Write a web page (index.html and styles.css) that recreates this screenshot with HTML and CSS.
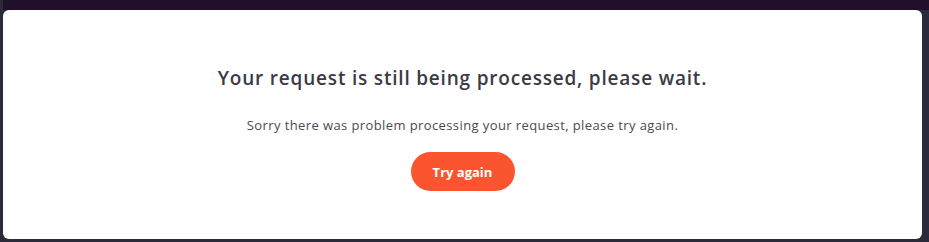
FILE: index.html
```html
<!DOCTYPE html>
<html lang="en">
<head>
<meta charset="utf-8">
<title>Request pending</title>
<link rel="stylesheet" href="styles.css">
</head>
<body>
<div class="backdrop">
  <div class="modal">
    <h1 class="title">Your request is still being processed, please wait.</h1>
    <p class="message">Sorry there was problem processing your request, please try again.</p>
    <button class="retry" type="button">Try again</button>
  </div>
</div>
</body>
</html>
```
FILE: styles.css
```css
html, body {
  margin: 0;
  padding: 0;
  height: 100%;
}
body {
  background: #211029;
  font-family: "Open Sans", "Noto Sans", sans-serif;
  overflow: hidden;
}
.backdrop {
  height: 242px;
  box-sizing: border-box;
  padding: 10px 7px 3px 3px;
  background: linear-gradient(to right, #2b2a3a 0, #2b2a3a 3px, transparent 3px), linear-gradient(to bottom, #211029 0, #211029 10px, #2b2a3a 10px);
  background-color: #211029;
}
.modal {
  background: #ffffff;
  border-radius: 6px;
  height: 229px;
  box-sizing: border-box;
  display: flex;
  flex-direction: column;
  align-items: center;
  padding-top: 56px;
}
.title {
  margin: 0;
  font-size: 19px;
  font-weight: 600;
  color: #3b3a45;
  line-height: 24px;
  letter-spacing: 0.8px;
}
.message {
  margin: 26px 0 0;
  font-size: 13px;
  font-weight: 400;
  color: #4a4950;
  line-height: 18px;
  letter-spacing: 0.4px;
}
.retry {
  margin-top: 18px;
  width: 104px;
  height: 39px;
  border: none;
  border-radius: 20px;
  background: #fb5530;
  color: #ffffff;
  font-family: "Open Sans", "Noto Sans", sans-serif;
  font-size: 13px;
  font-weight: 700;
  cursor: pointer;
}
```
